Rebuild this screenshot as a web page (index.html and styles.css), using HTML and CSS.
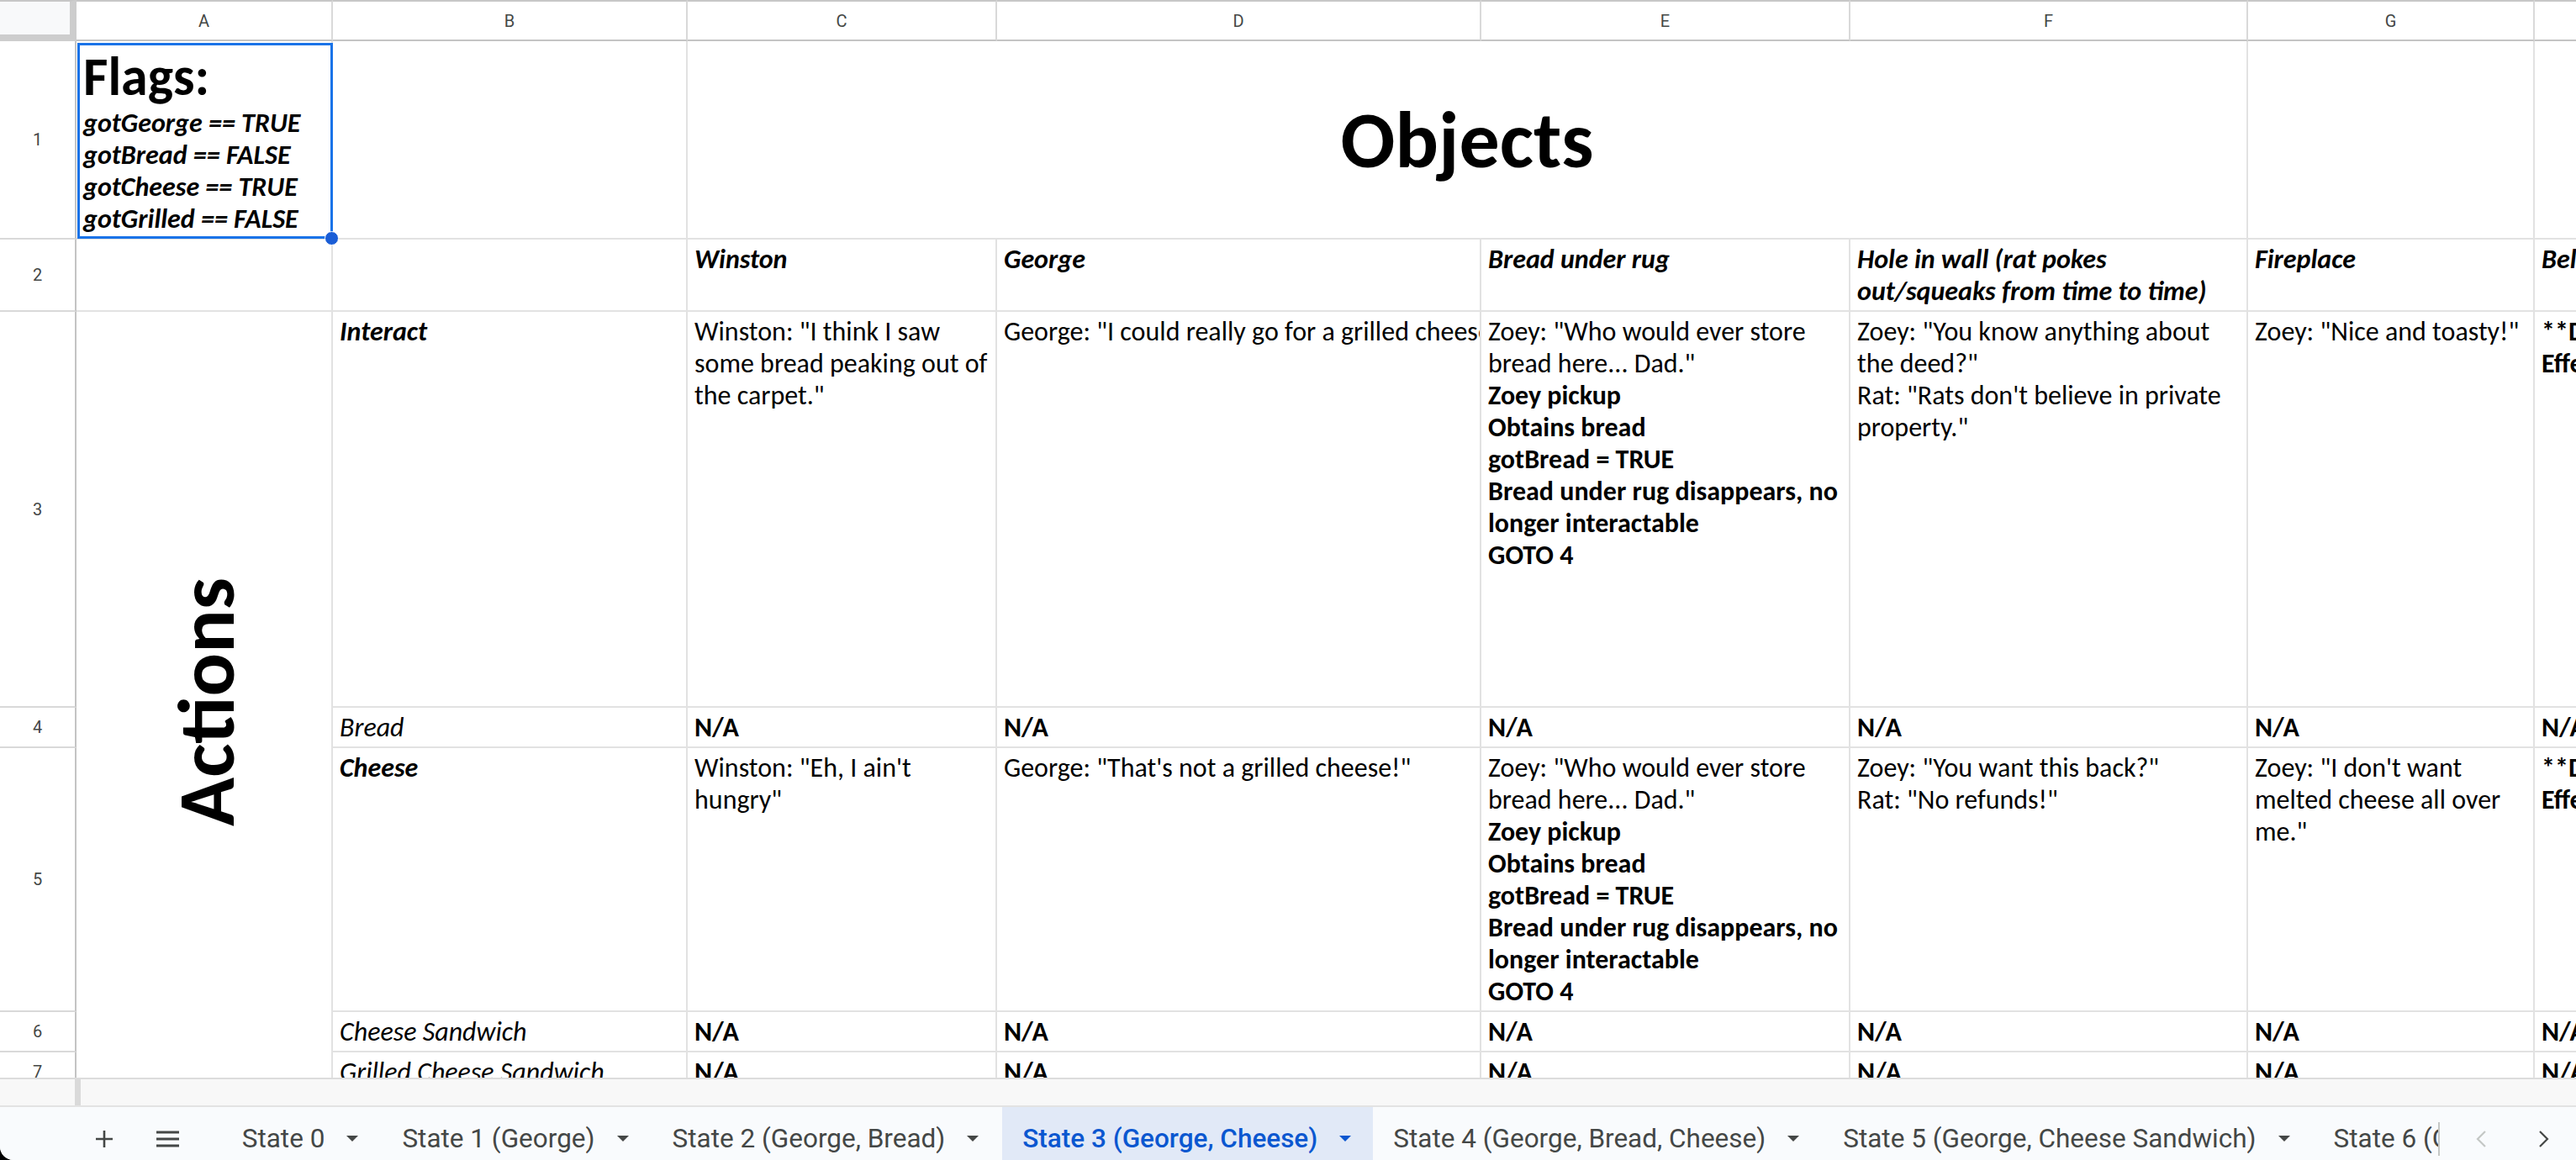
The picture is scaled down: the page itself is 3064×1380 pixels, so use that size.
FILE: index.html
```html
<!DOCTYPE html>
<html lang="en">
<head>
<meta charset="utf-8">
<title>State 3 (George, Cheese)</title>
<link rel="stylesheet" href="styles.css">
</head>
<body>
<div class="app">
  <div class="sheet">
    <!-- header row -->
    <div class="corner"></div>
    <div class="colhdr">A</div>
    <div class="colhdr">B</div>
    <div class="colhdr">C</div>
    <div class="colhdr">D</div>
    <div class="colhdr">E</div>
    <div class="colhdr">F</div>
    <div class="colhdr">G</div>
    <div class="colhdr">H</div>

    <!-- row 1 -->
    <div class="rowhdr">1</div>
    <div class="cell flags">
      <div class="flags-title">Flags:</div>
      <div class="bi">gotGeorge == TRUE</div>
      <div class="bi">gotBread == FALSE</div>
      <div class="bi">gotCheese == TRUE</div>
      <div class="bi">gotGrilled == FALSE</div>
    </div>
    <div class="cell"></div>
    <div class="cell objects">Objects</div>
    <div class="cell"></div>
    <div class="cell"></div>

    <!-- row 2 -->
    <div class="rowhdr">2</div>
    <div class="cell"></div>
    <div class="cell"></div>
    <div class="cell bi">Winston</div>
    <div class="cell bi">George</div>
    <div class="cell bi">Bread under rug</div>
    <div class="cell bi">Hole in wall (rat pokes<br>out/squeaks from time to time)</div>
    <div class="cell bi">Fireplace</div>
    <div class="cell bi">Bel</div>

    <!-- row 3 -->
    <div class="cell actions"><span class="actions-text">Actions</span></div>
    <div class="rowhdr">3</div>
    <div class="cell bi">Interact</div>
    <div class="cell">Winston: "I think I saw<br>some bread peaking out of<br>the carpet."</div>
    <div class="cell">George: "I could really go for a grilled cheese!"</div>
    <div class="cell">Zoey: "Who would ever store<br>bread here... Dad."<br><b>Zoey pickup</b><br><b>Obtains bread</b><br><b>gotBread = TRUE</b><br><b>Bread under rug disappears, no</b><br><b>longer interactable</b><br><b>GOTO 4</b></div>
    <div class="cell">Zoey: "You know anything about<br>the deed?"<br>Rat: "Rats don't believe in private<br>property."</div>
    <div class="cell">Zoey: "Nice and toasty!"</div>
    <div class="cell b">**D<br>Effe</div>

    <!-- row 4 -->
    <div class="rowhdr">4</div>
    <div class="cell i">Bread</div>
    <div class="cell b">N/A</div>
    <div class="cell b">N/A</div>
    <div class="cell b">N/A</div>
    <div class="cell b">N/A</div>
    <div class="cell b">N/A</div>
    <div class="cell b">N/A</div>

    <!-- row 5 -->
    <div class="rowhdr">5</div>
    <div class="cell bi">Cheese</div>
    <div class="cell">Winston: "Eh, I ain't<br>hungry"</div>
    <div class="cell">George: "That's not a grilled cheese!"</div>
    <div class="cell">Zoey: "Who would ever store<br>bread here... Dad."<br><b>Zoey pickup</b><br><b>Obtains bread</b><br><b>gotBread = TRUE</b><br><b>Bread under rug disappears, no</b><br><b>longer interactable</b><br><b>GOTO 4</b></div>
    <div class="cell">Zoey: "You want this back?"<br>Rat: "No refunds!"</div>
    <div class="cell">Zoey: "I don't want<br>melted cheese all over<br>me."</div>
    <div class="cell b">**D<br>Effe</div>

    <!-- row 6 -->
    <div class="rowhdr">6</div>
    <div class="cell i">Cheese Sandwich</div>
    <div class="cell b">N/A</div>
    <div class="cell b">N/A</div>
    <div class="cell b">N/A</div>
    <div class="cell b">N/A</div>
    <div class="cell b">N/A</div>
    <div class="cell b">N/A</div>

    <!-- row 7 -->
    <div class="rowhdr">7</div>
    <div class="cell i">Grilled Cheese Sandwich</div>
    <div class="cell b">N/A</div>
    <div class="cell b">N/A</div>
    <div class="cell b">N/A</div>
    <div class="cell b">N/A</div>
    <div class="cell b">N/A</div>
    <div class="cell b">N/A</div>
  </div>

  <div class="band">
    <div class="band-spacer"></div>
    <div class="band-grip"></div>
  </div>

  <div class="tabbar">
    <div class="iconbtn">
      <svg width="22" height="22" viewBox="0 0 22 22"><path d="M11 1v20M1 11h20" stroke="#444746" stroke-width="2.6" fill="none"/></svg>
    </div>
    <div class="iconbtn menu">
      <svg width="29" height="20" viewBox="0 0 29 20"><path d="M1 2h27M1 10h27M1 18h27" stroke="#444746" stroke-width="3" fill="none"/></svg>
    </div>
    <div class="tabs">
      <div class="tab"><span>State 0</span><span class="caret"></span></div>
      <div class="tab"><span>State 1 (George)</span><span class="caret"></span></div>
      <div class="tab"><span>State 2 (George, Bread)</span><span class="caret"></span></div>
      <div class="tab active"><span>State 3 (George, Cheese)</span><span class="caret"></span></div>
      <div class="tab"><span>State 4 (George, Bread, Cheese)</span><span class="caret"></span></div>
      <div class="tab"><span>State 5 (George, Cheese Sandwich)</span><span class="caret"></span></div>
      <div class="tab"><span>State 6 (George, Bread, Cheese Sandwich)</span><span class="caret"></span></div>
    </div>
    <div class="tabs-divider"></div>
    <div class="navbtn prev">
      <svg width="14" height="22" viewBox="0 0 14 22"><path d="M12 2L3 11l9 9" stroke="#c4c7c5" stroke-width="2.2" fill="none"/></svg>
    </div>
    <div class="navbtn">
      <svg width="14" height="22" viewBox="0 0 14 22"><path d="M2 2l9 9-9 9" stroke="#444746" stroke-width="2.2" fill="none"/></svg>
    </div>
  </div>
</div>
</body>
</html>
```
FILE: styles.css
```css
* {
  box-sizing: border-box;
}

html,
body {
  margin: 0;
  padding: 0;
  background: #000;
}

body {
  width: 3064px;
  height: 1380px;
  overflow: hidden;
  font-family: Carlito, Lato, "Liberation Sans", sans-serif;
}

.app {
  width: 3064px;
  height: 1380px;
  background: #fff;
  border-bottom-left-radius: 16px;
  overflow: hidden;
  display: flex;
  flex-direction: column;
}

/* ---------- grid ---------- */
.sheet {
  flex: none;
  width: 3064px;
  height: 1282px;
  overflow: hidden;
  display: grid;
  grid-template-columns: 91px 305px 422px 368px 576px 439px 473px 341px 320px;
  grid-template-rows: 49px 236px 86px 471px 48px 314px 48px 48px;
}

.corner {
  background: #f8f9fa;
  border-top: 2px solid #c7c7c7;
  border-right: 8px solid #cdcdcd;
  border-bottom: 8px solid #cdcdcd;
}

.colhdr {
  border-top: 2px solid #c7c7c7;
  border-right: 2px solid #d9d9d9;
  border-bottom: 2px solid #c4c4c4;
  display: flex;
  align-items: center;
  justify-content: center;
  font-family: Roboto, "Liberation Sans", sans-serif;
  font-size: 20px;
  color: #444746;
  background: #fff;
}

.rowhdr {
  border-right: 2px solid #c4c4c4;
  border-bottom: 2px solid #d9d9d9;
  display: flex;
  align-items: center;
  justify-content: center;
  font-family: Roboto, "Liberation Sans", sans-serif;
  font-size: 20px;
  color: #444746;
  background: #fff;
}

.cell {
  min-width: 0;
  border-right: 2px solid #e2e2e2;
  border-bottom: 2px solid #e2e2e2;
  padding: 5px 8px 0 8px;
  font-size: 32px;
  line-height: 38px;
  color: #000;
  white-space: nowrap;
  overflow: hidden;
}

.b,
.cell b {
  font-weight: 700;
}

.i {
  font-style: italic;
}

.bi {
  font-weight: 700;
  font-style: italic;
}

/* A1 - flags, selected */
.flags {
  position: relative;
  overflow: visible;
  padding-top: 6px;
}

.flags-title {
  font-size: 64px;
  line-height: 73px;
  font-weight: 700;
}

.flags::before {
  content: "";
  position: absolute;
  left: 1px;
  top: 2px;
  right: -2px;
  bottom: -1px;
  border: 3px solid #1a73e8;
  pointer-events: none;
}

.flags::after {
  content: "";
  position: absolute;
  width: 15px;
  height: 15px;
  right: -9px;
  bottom: -9px;
  border-radius: 50%;
  background: #1a5dd6;
  border: 1px solid #fff;
}

/* merged C1:F1 */
.objects {
  grid-column: span 4;
  display: flex;
  align-items: center;
  justify-content: center;
  padding: 0;
  font-size: 96px;
  line-height: normal;
  font-weight: 700;
}

/* merged A3:A7 */
.actions {
  grid-column: 2;
  grid-row: 4 / 9;
  display: flex;
  align-items: center;
  justify-content: center;
  padding: 0 0 0 6px;
}

.actions-text {
  writing-mode: vertical-rl;
  transform: rotate(180deg);
  font-size: 96px;
  line-height: normal;
  font-weight: 700;
}

/* ---------- scroll band ---------- */
.band {
  flex: none;
  height: 33px;
  background: #f8f8f8;
  border-top: 2px solid #dcdcdc;
  display: flex;
}

.band-spacer {
  width: 89px;
}

.band-grip {
  width: 7px;
  background: #dadada;
}

/* ---------- sheet tabs ---------- */
.tabbar {
  flex: none;
  height: 65px;
  background: #f9fbfd;
  border-top: 2px solid #e3e3e3;
  display: flex;
  align-items: stretch;
  padding-left: 96px;
  font-family: Roboto, "Liberation Sans", sans-serif;
  font-size: 31.5px;
  color: #444746;
}

.iconbtn {
  width: 60px;
  display: flex;
  align-items: center;
  justify-content: center;
  padding-top: 12px;
}

.iconbtn.menu {
  margin-left: 19px;
  margin-right: 36px;
}

.tabs {
  flex: none;
  width: 2636px;
  display: flex;
  overflow: hidden;
}

.tab {
  flex: none;
  display: flex;
  align-items: center;
  padding: 12px 28px 0 24px;
  white-space: nowrap;
}

.caret {
  width: 0;
  height: 0;
  margin-left: 26px;
  border-left: 7px solid transparent;
  border-right: 7px solid transparent;
  border-top: 7px solid #444746;
}

.tab.active {
  background: #e1e9f7;
  color: #0b57d0;
  font-weight: 500;
  padding-right: 26px;
}

.tab.active .caret {
  border-top-color: #0b57d0;
}

.tabs-divider {
  flex: none;
  width: 2px;
  height: 40px;
  margin-top: 18px;
  background: #c4c7c5;
}

.navbtn {
  width: 80px;
  display: flex;
  align-items: center;
  justify-content: center;
  padding-top: 12px;
}

.navbtn.prev {
  margin-left: 12px;
}
```
